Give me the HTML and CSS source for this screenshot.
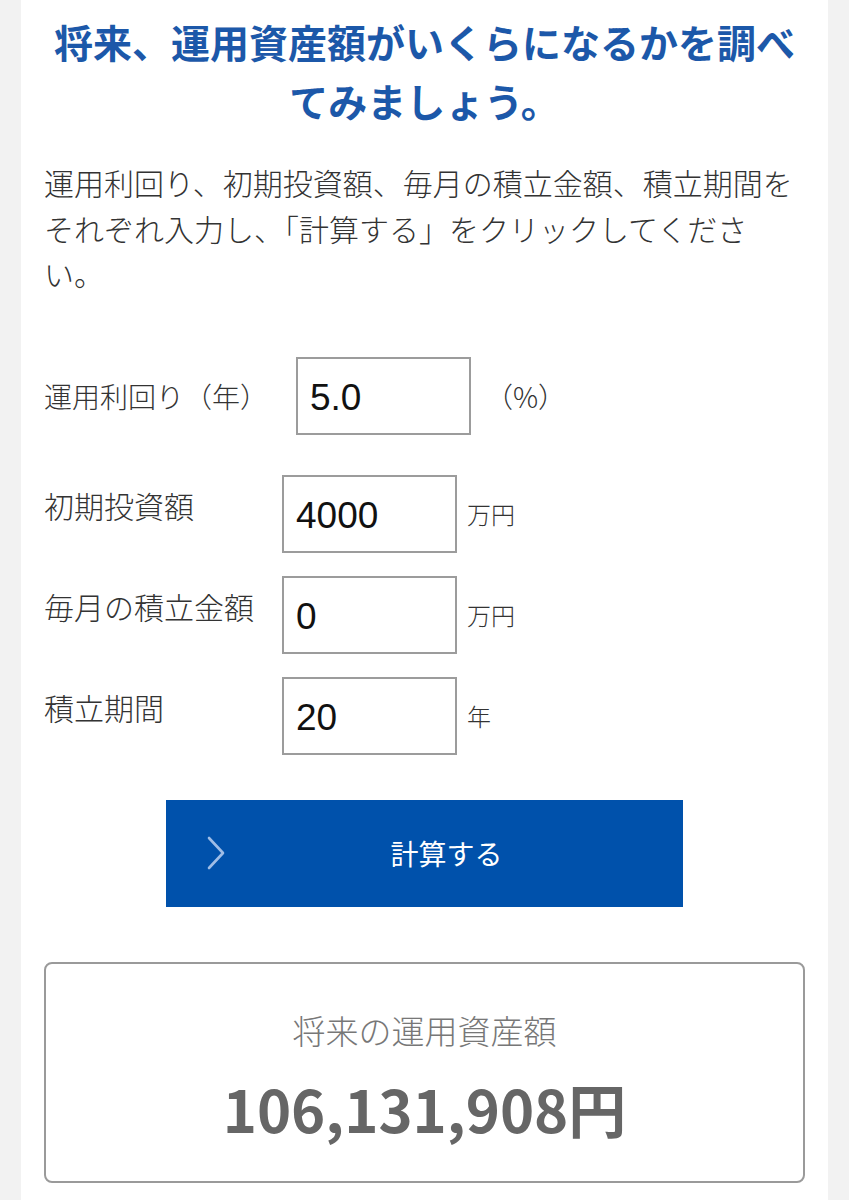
FILE: index.html
```html
<!DOCTYPE html>
<html lang="ja">
<head>
    <meta charset="UTF-8">
    <meta name="viewport" content="width=device-width, initial-scale=1.0">
    <title>資産運用シミュレーション</title>
    <link rel="stylesheet" href="styles.css">
</head>
<body>
<div class="page">
    <h1 class="sim-title">将来、運用資産額がいくらになるかを調べてみましょう。</h1>
    <p class="sim-lead">運用利回り、初期投資額、毎月の積立金額、積立期間をそれぞれ入力し、「計算する」をクリックしてください。</p>

    <div class="rate-row">
        <label class="rate-label" for="rate">運用利回り（年）</label>
        <input id="rate" class="sim-input" type="text" value="5.0">
        <span class="rate-unit">（%）</span>
    </div>

    <div class="sim-rows">
        <div class="sim-row">
            <label class="sim-label" for="initial">初期投資額</label>
            <input id="initial" class="sim-input" type="text" value="4000">
            <span class="sim-unit">万円</span>
        </div>
        <div class="sim-row">
            <label class="sim-label" for="monthly">毎月の積立金額</label>
            <input id="monthly" class="sim-input" type="text" value="0">
            <span class="sim-unit">万円</span>
        </div>
        <div class="sim-row">
            <label class="sim-label" for="years">積立期間</label>
            <input id="years" class="sim-input" type="text" value="20">
            <span class="sim-unit">年</span>
        </div>
    </div>

    <button class="calc-btn" type="button">
        <svg class="calc-arrow" width="20" height="34" viewBox="0 0 20 34">
            <polyline points="3,2 17,17 3,32" fill="none" stroke="#9fbde6" stroke-width="2.6" stroke-linecap="round" stroke-linejoin="round"/>
        </svg>
        <span class="calc-text">計算する</span>
    </button>

    <div class="result-box">
        <div class="result-label">将来の運用資産額</div>
        <div class="result-value">106,131,908円</div>
    </div>
</div>
</body>
</html>
```

FILE: styles.css
```css
body {
    margin: 0;
    background: #f2f2f2;
    font-family: "Noto Sans CJK JP", "Noto Sans", sans-serif;
    color: #333;
}

.page {
    width: 807px;
    min-height: 1200px;
    margin-left: 21px;
    padding: 12px 23px 0;
    box-sizing: border-box;
    background: #fff;
}

.sim-title {
    margin: 0;
    font-size: 39px;
    line-height: 59px;
    font-weight: 700;
    color: #1c58a9;
    text-align: center;
}

.sim-lead {
    margin: 30px 0 0;
    font-size: 30px;
    line-height: 45.5px;
    font-weight: 300;
    color: #333;
}

.rate-row {
    display: flex;
    align-items: center;
    margin-top: 60px;
}

.rate-label {
    width: 252px;
    font-size: 28px;
    line-height: 40px;
    font-weight: 300;
}

.rate-unit {
    margin-left: 14px;
    font-size: 28px;
    font-weight: 300;
}

.sim-rows {
    display: flex;
    flex-direction: column;
    gap: 23px;
    margin-top: 40px;
}

.sim-row {
    display: flex;
    align-items: center;
}

.sim-label {
    width: 238px;
    padding-bottom: 18px;
    font-size: 30px;
    line-height: 40px;
    font-weight: 300;
}

.sim-unit {
    margin-left: 10px;
    font-size: 24px;
    font-weight: 300;
}

.sim-input {
    width: 175px;
    height: 78px;
    box-sizing: border-box;
    margin: 0;
    padding: 4px 12px 0;
    border: 2px solid #9c9c9c;
    border-radius: 0;
    background: #fff;
    font-family: "Liberation Sans", Arial, sans-serif;
    font-size: 37px;
    color: #111;
    outline: none;
}

.calc-btn {
    display: flex;
    align-items: center;
    width: 517px;
    height: 107px;
    margin: 45px auto 0;
    padding: 0 16px 0 40px;
    border: none;
    background: #0051ab;
    cursor: pointer;
}

.calc-arrow {
    flex: none;
}

.calc-text {
    flex: 1;
    text-align: center;
    font-family: "Noto Sans CJK JP", sans-serif;
    font-size: 28px;
    color: #fff;
}

.result-box {
    margin-top: 55px;
    height: 221px;
    box-sizing: border-box;
    padding-top: 44px;
    border: 2px solid #9a9a9a;
    border-radius: 8px;
    text-align: center;
}

.result-label {
    font-size: 33px;
    line-height: 44px;
    font-weight: 300;
    color: #777;
}

.result-value {
    margin-top: 21px;
    font-size: 58px;
    line-height: 70px;
    font-weight: 700;
    color: #666;
}
```
